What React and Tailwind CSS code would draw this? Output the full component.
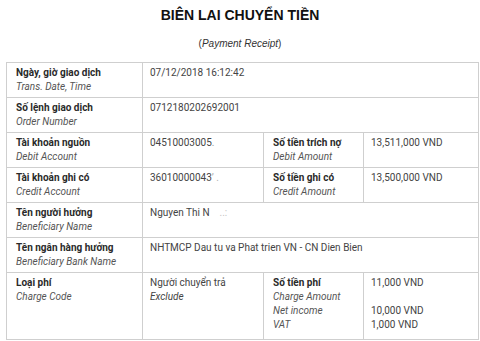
import React from "react";

const rows = [
  { label: "Ngày, giờ giao dịch", sub: "Trans. Date, Time", value: "07/12/2018 16:12:42" },
  { label: "Số lệnh giao dịch", sub: "Order Number", value: "0712180202692001" },
  {
    label: "Tài khoản nguồn",
    sub: "Debit Account",
    value: (
      <>
        04510003005<span className="text-[#9a9a9a]">.</span>
      </>
    ),
    label2: "Số tiền trích nợ",
    sub2: "Debit Amount",
    value2: "13,511,000 VND",
  },
  {
    label: "Tài khoản ghi có",
    sub: "Credit Account",
    value: (
      <>
        36010000043<span className="text-[#b0b0b0]">&#8217; .</span>
      </>
    ),
    label2: "Số tiền ghi có",
    sub2: "Credit Amount",
    value2: "13,500,000 VND",
  },
  {
    label: "Tên người hưởng",
    sub: "Beneficiary Name",
    value: (
      <>
        Nguyen Thi N<span className="text-[#c4c4c4] ml-[10px]">..:</span>
      </>
    ),
  },
  {
    label: "Tên ngân hàng hưởng",
    sub: "Beneficiary Bank Name",
    value: "NHTMCP Dau tu va Phat trien VN - CN Dien Bien",
  },
];

const Label = ({ title, sub }) => (
  <>
    <div className="font-bold text-[#2a2a2a]">{title}</div>
    <div className="italic text-[#555]">{sub}</div>
  </>
);

const cell = "border border-[#cfcfcf] align-top pt-[3px] pb-[3px]";

export default function App() {
  return (
    <div className="w-[480px] h-[341px] overflow-hidden bg-white px-[6px]" style={{ fontFamily: "Roboto, sans-serif" }}>
      <h1
        className="mt-[7px] text-center text-[14px] leading-4 font-bold text-[#111]"
        style={{ fontFamily: "'Liberation Sans', Arial, sans-serif" }}
      >
        BIÊN LAI CHUYỂN TIỀN
      </h1>
      <p
        className="mt-[15px] text-center text-[10px] leading-3 text-[#333]"
        style={{ fontFamily: "'Liberation Sans', Arial, sans-serif" }}
      >
        (<span className="italic">Payment Receipt</span>)
      </p>

      <table className="mt-[12px] w-[472px] table-fixed border-collapse text-[10px] leading-[14px] text-[#444]">
        <colgroup>
          <col className="w-[136px]" />
          <col className="w-[121px]" />
          <col className="w-[100px]" />
          <col className="w-[115px]" />
        </colgroup>
        <tbody>
          {rows.map((r, i) => (
            <tr key={i} className="h-[35px]">
              <td className={`${cell} pl-[9px]`}>
                <Label title={r.label} sub={r.sub} />
              </td>
              {r.label2 ? (
                <>
                  <td className={`${cell} pl-[7px]`}>{r.value}</td>
                  <td className={`${cell} pl-[9px]`}>
                    <Label title={r.label2} sub={r.sub2} />
                  </td>
                  <td className={`${cell} pl-[7px]`}>{r.value2}</td>
                </>
              ) : (
                <td colSpan={3} className={`${cell} pl-[7px]`}>
                  {r.value}
                </td>
              )}
            </tr>
          ))}
          <tr className="h-[67px]">
            <td className={`${cell} pl-[9px]`}>
              <Label title="Loại phí" sub="Charge Code" />
            </td>
            <td className={`${cell} pl-[7px]`}>
              <div>Người chuyển trả</div>
              <div className="italic">Exclude</div>
            </td>
            <td className={`${cell} pl-[9px]`}>
              <div className="font-bold text-[#2a2a2a]">Số tiền phí</div>
              <div className="italic text-[#555]">Charge Amount</div>
              <div className="italic text-[#555]">Net income</div>
              <div className="italic text-[#555]">VAT</div>
            </td>
            <td className={`${cell} pl-[7px]`}>
              <div>11,000 VND</div>
              <div>&nbsp;</div>
              <div>10,000 VND</div>
              <div>1,000 VND</div>
            </td>
          </tr>
        </tbody>
      </table>
    </div>
  );
}
